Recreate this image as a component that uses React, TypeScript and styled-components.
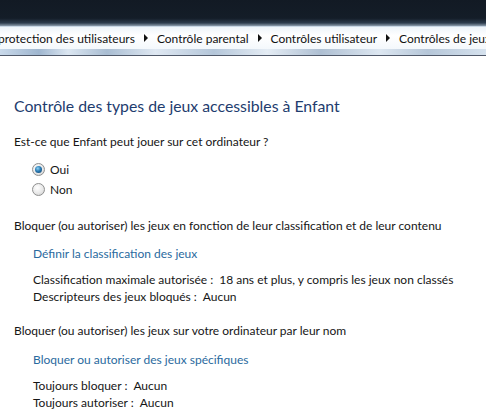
import styled, { createGlobalStyle } from "styled-components"

const GlobalStyle = createGlobalStyle`
  html, body {
    margin: 0;
    padding: 0;
    background: #ffffff;
  }
  body {
    font-family: Lato, "Open Sans", sans-serif;
    font-size: 12px;
    color: #161616;
  }
`

const Window = styled.div`
  width: 486px;
  height: 415px;
  overflow: hidden;
  background: #ffffff;
`

const TitleBar = styled.div`
  height: 26px;
  background: linear-gradient(
    to bottom,
    #121a24 0%,
    #141d28 70%,
    #2c3b4c 88%,
    #8c9cac 100%
  );
`

const AddressBar = styled.div`
  height: 22px;
  background: linear-gradient(to bottom, #eef4fa 0%, #ffffff 40%, #f4f8fc 100%);
  border-top: 1px solid #c8d6e4;
  display: flex;
  align-items: center;
  white-space: nowrap;
  overflow: hidden;
`

const Crumbs = styled.div`
  display: flex;
  align-items: center;
  margin-left: -9px;
  color: #111;
  font-size: 12px;
`

const Crumb = styled.span`
  padding: 0 7px;
`

const Arrow = styled.span`
  width: 0;
  height: 0;
  border-top: 4px solid transparent;
  border-bottom: 4px solid transparent;
  border-left: 4px solid #111;
  margin: 0 2px;
`

const Strip = styled.div`
  height: 6px;
  background: linear-gradient(
    to right,
    #c9d9ea 0%,
    #9fb6cf 8%,
    #dbe6f1 14%,
    #a9bdd2 22%,
    #dfe8f2 32%,
    #b4c6d9 44%,
    #e4ecf4 55%,
    #aebfd2 66%,
    #dde7f1 78%,
    #b5c6d8 88%,
    #d6e2ee 100%
  );
  border-bottom: 1px solid #50596a;
`

const Content = styled.div`
  padding: 40px 14px 0 14px;
`

const Heading = styled.h1`
  margin: 0 0 17px 0;
  font-size: 15.8px;
  line-height: 20px;
  font-weight: 400;
  color: #1e3c6e;
`

const Text = styled.div`
  line-height: 17px;
`

const Question = styled(Text)`
  margin-bottom: 9px;
`

const RadioRow = styled.label`
  display: flex;
  align-items: center;
  gap: 5px;
  margin-left: 18px;
  height: 20px;
`

const Radio = styled.span<{ checked?: boolean }>`
  box-sizing: border-box;
  width: 13px;
  height: 13px;
  border-radius: 50%;
  border: 1px solid #8e8f8f;
  background: radial-gradient(circle at 40% 35%, #ffffff 0%, #e8e8e8 55%, #c9c9c9 100%);
  display: flex;
  align-items: center;
  justify-content: center;

  &::after {
    content: "";
    display: ${({ checked }) => (checked ? "block" : "none")};
    width: 7px;
    height: 7px;
    border-radius: 50%;
    background: radial-gradient(circle at 40% 35%, #8fd3f5 0%, #2a7bb4 45%, #0d3a63 100%);
  }
`

const Section = styled.div<{ top: number }>`
  margin-top: ${({ top }) => top}px;
`

const Indent = styled.div`
  margin-left: 19px;
`

const Link = styled.a<{ top: number }>`
  display: block;
  color: #2a6a9e;
  text-decoration: none;
  line-height: 17px;
  margin: ${({ top }) => top}px 0 9px 0;
`

const Pair = styled.div`
  line-height: 17px;
  white-space: nowrap;
  span + span {
    margin-left: 6px;
  }
`

export default function App() {
  return (
    <Window>
      <GlobalStyle />
      <TitleBar />
      <AddressBar>
        <Crumbs>
          <Crumb>protection des utilisateurs</Crumb>
          <Arrow />
          <Crumb>Contrôle parental</Crumb>
          <Arrow />
          <Crumb>Contrôles utilisateur</Crumb>
          <Arrow />
          <Crumb>Contrôles de jeux</Crumb>
        </Crumbs>
      </AddressBar>
      <Strip />
      <Content>
        <Heading>Contrôle des types de jeux accessibles à Enfant</Heading>
        <Question>Est-ce que Enfant peut jouer sur cet ordinateur ?</Question>
        <RadioRow>
          <Radio checked />
          Oui
        </RadioRow>
        <RadioRow>
          <Radio />
          Non
        </RadioRow>

        <Section top={18}>
          <Text>
            Bloquer (ou autoriser) les jeux en fonction de leur classification et de leur contenu
          </Text>
          <Indent>
            <Link href="#" top={11}>
              Définir la classification des jeux
            </Link>
            <Pair>
              <span>Classification maximale autorisée :</span>
              <span>18 ans et plus, y compris les jeux non classés</span>
            </Pair>
            <Pair>
              <span>Descripteurs des jeux bloqués :</span>
              <span>Aucun</span>
            </Pair>
          </Indent>
        </Section>

        <Section top={17}>
          <Text>Bloquer (ou autoriser) les jeux sur votre ordinateur par leur nom</Text>
          <Indent>
            <Link href="#" top={12}>
              Bloquer ou autoriser des jeux spécifiques
            </Link>
            <Pair>
              <span>Toujours bloquer :</span>
              <span>Aucun</span>
            </Pair>
            <Pair>
              <span>Toujours autoriser :</span>
              <span>Aucun</span>
            </Pair>
          </Indent>
        </Section>
      </Content>
    </Window>
  )
}
